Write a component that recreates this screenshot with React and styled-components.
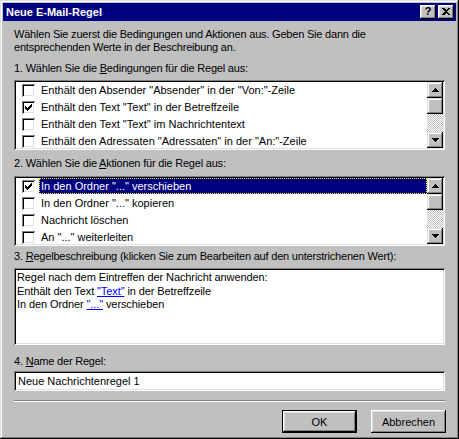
import React from 'react'
import styled, { createGlobalStyle } from 'styled-components'

const GlobalStyle = createGlobalStyle`
  html, body {
    margin: 0;
    padding: 0;
    background: #c0c0c0;
  }
  * { box-sizing: border-box; }
`

const Window = styled.div`
  width: 459px;
  height: 439px;
  padding: 3px;
  background: #c0c0c0;
  font-family: "Liberation Sans", Arial, sans-serif;
  font-size: 11px;
  color: #000;
  box-shadow: inset -1px -1px #000, inset 1px 1px #dfdfdf,
    inset -2px -2px #808080, inset 2px 2px #fff;
  display: flex;
  flex-direction: column;
`

const TitleBar = styled.div`
  height: 18px;
  background: #000080;
  display: flex;
  align-items: center;
  padding: 0 2px 0 3px;
`

const Title = styled.div`
  flex: 1;
  color: #fff;
  font-weight: bold;
  font-size: 11px;
`

const CapButton = styled.div`
  width: 16px;
  height: 14px;
  margin-left: ${p => p.$gap || 0}px;
  background: #c0c0c0;
  box-shadow: inset -1px -1px #000, inset 1px 1px #fff,
    inset -2px -2px #808080, inset 2px 2px #dfdfdf;
  display: flex;
  align-items: center;
  justify-content: center;
  font-weight: bold;
  font-size: 11px;
  line-height: 1;
  padding-bottom: 1px;
`

const Body = styled.div`
  flex: 1;
  display: flex;
  flex-direction: column;
  padding: 0 11px;
`

const Text = styled.div`
  line-height: 13px;
  letter-spacing: -0.2px;
  margin-top: ${p => p.$mt || 0}px;
  white-space: nowrap;
`

const Sunken = styled.div`
  margin-top: ${p => p.$mt || 0}px;
  height: ${p => p.$h}px;
  background: #fff;
  padding: 2px;
  box-shadow: inset 1px 1px #808080, inset -1px -1px #fff,
    inset 2px 2px #000, inset -2px -2px #dfdfdf;
`

const ListBox = styled(Sunken)`
  display: flex;
`

const Items = styled.div`
  flex: 1;
  overflow: hidden;
`

const Row = styled.div`
  height: 17px;
  display: flex;
  align-items: flex-start;
  padding-left: 6px;
`

const Check = styled.div`
  width: 13px;
  height: 13px;
  margin-top: 2px;
  background: #fff;
  box-shadow: inset 1px 1px #808080, inset -1px -1px #fff,
    inset 2px 2px #000, inset -2px -2px #dfdfdf;
  flex: none;
  position: relative;
  svg { position: absolute; left: 3px; top: 3px; }
`

const Label = styled.div`
  flex: 1;
  margin-left: 4px;
  padding-left: 2px;
  height: 16px;
  line-height: 16px;
  white-space: nowrap;
  background: ${p => (p.$selected ? '#000080' : 'transparent')};
  color: ${p => (p.$selected ? '#fff' : '#000')};
  outline: ${p => (p.$selected ? '1px dotted #ffff00' : 'none')};
  outline-offset: -1px;
`

const ScrollBar = styled.div`
  width: 16px;
  display: flex;
  flex-direction: column;
  background: repeating-conic-gradient(#c0c0c0 0 25%, #fff 0 50%) 0 0 / 2px 2px;
`

const ScrollButton = styled.div`
  width: 16px;
  height: 16px;
  flex: none;
  background: #c0c0c0;
  box-shadow: inset -1px -1px #000, inset 1px 1px #dfdfdf,
    inset -2px -2px #808080, inset 2px 2px #fff;
  display: flex;
  align-items: center;
  justify-content: center;
  margin-top: ${p => (p.$bottom ? 'auto' : '0')};
`

const Desc = styled(Sunken)`
  padding: 3px 3px;
  line-height: 13.5px;
  letter-spacing: -0.1px;
`

const Link = styled.span`
  color: #0000ff;
  text-decoration: underline;
`

const Input = styled(Sunken)`
  padding: 2px 4px;
  line-height: 16px;
`

const Separator = styled.div`
  margin-top: 9px;
  height: 2px;
  border-top: 1px solid #808080;
  border-bottom: 1px solid #fff;
`

const ButtonRow = styled.div`
  margin-top: 8px;
  margin-right: -1px;
  display: flex;
  justify-content: flex-end;
  gap: 14px;
`

const Button = styled.div`
  width: 75px;
  height: 23px;
  display: flex;
  align-items: center;
  justify-content: center;
  background: #c0c0c0;
  border: ${p => (p.$default ? '1px solid #000' : 'none')};
  box-shadow: inset -1px -1px #000, inset 1px 1px #fff,
    inset -2px -2px #808080, inset 2px 2px #dfdfdf;
`

const CheckMark = () => (
  <svg width="7" height="7" viewBox="0 0 7 7" shapeRendering="crispEdges">
    {[2, 3, 4, 3, 2, 1, 0].map((y, x) => (
      <rect key={x} x={x} y={y} width="1" height="3" fill="#000" />
    ))}
  </svg>
)

const Arrow = ({ down }) => (
  <svg width="7" height="4" viewBox="0 0 7 4" shapeRendering="crispEdges">
    {down ? (
      <polygon points="0,0 7,0 3.5,4" fill="#000" />
    ) : (
      <polygon points="3.5,0 7,4 0,4" fill="#000" />
    )}
  </svg>
)

const Scroll = () => (
  <ScrollBar>
    <ScrollButton><Arrow /></ScrollButton>
    <ScrollButton />
    <ScrollButton $bottom><Arrow down /></ScrollButton>
  </ScrollBar>
)

const conditions = [
  { text: 'Enthält den Absender "Absender" in der "Von:"-Zeile', checked: false },
  { text: 'Enthält den Text "Text" in der Betreffzeile', checked: true },
  { text: 'Enthält den Text "Text" im Nachrichtentext', checked: false },
  { text: 'Enthält den Adressaten "Adressaten" in der "An:"-Zeile', checked: false },
]

const actions = [
  { text: 'In den Ordner "..." verschieben', checked: true, selected: true },
  { text: 'In den Ordner "..." kopieren', checked: false },
  { text: 'Nachricht löschen', checked: false },
  { text: 'An "..." weiterleiten', checked: false },
]

const List = ({ items }) => (
  <>
    <Items>
      {items.map(item => (
        <Row key={item.text}>
          <Check>{item.checked && <CheckMark />}</Check>
          <Label $selected={item.selected}>{item.text}</Label>
        </Row>
      ))}
    </Items>
    <Scroll />
  </>
)

function App() {
  return (
    <>
      <GlobalStyle />
      <Window>
        <TitleBar>
          <Title>Neue E-Mail-Regel</Title>
          <CapButton>?</CapButton>
          <CapButton $gap={2}>
            <svg width="8" height="7" viewBox="0 0 8 7" shapeRendering="crispEdges">
              <path d="M0 0h2l2 2 2-2h2L5 3.5 8 7H6L4 5 2 7H0l3-3.5z" fill="#000" />
            </svg>
          </CapButton>
        </TitleBar>
        <Body>
          <Text $mt={7}>
            Wählen Sie zuerst die Bedingungen und Aktionen aus. Geben Sie dann die
            <br />
            entsprechenden Werte in der Beschreibung an.
          </Text>
          <Text $mt={8}>1. Wählen Sie die <u>B</u>edingungen für die Regel aus:</Text>
          <ListBox $mt={5} $h={70}>
            <List items={conditions} />
          </ListBox>
          <Text $mt={7}>2. Wählen Sie die <u>A</u>ktionen für die Regel aus:</Text>
          <ListBox $mt={6} $h={70}>
            <List items={actions} />
          </ListBox>
          <Text $mt={4}>
            3. <u>R</u>egelbeschreibung (klicken Sie zum Bearbeiten auf den unterstrichenen Wert):
          </Text>
          <Desc $mt={5} $h={77}>
            Regel nach dem Eintreffen der Nachricht anwenden:
            <br />
            Enthält den Text <Link>"Text"</Link> in der Betreffzeile
            <br />
            In den Ordner <Link>"..."</Link> verschieben
          </Desc>
          <Text $mt={10}>4. <u>N</u>ame der Regel:</Text>
          <Input $mt={3} $h={20}>Neue Nachrichtenregel 1</Input>
          <Separator />
          <ButtonRow>
            <Button $default>OK</Button>
            <Button>Abbrechen</Button>
          </ButtonRow>
        </Body>
      </Window>
    </>
  )
}

export default App
